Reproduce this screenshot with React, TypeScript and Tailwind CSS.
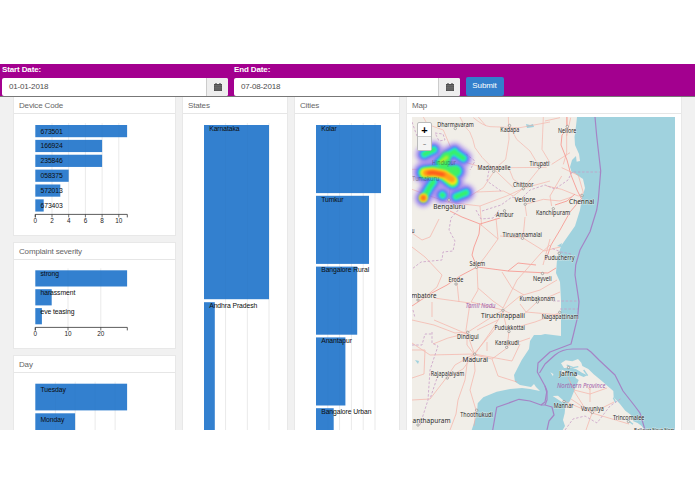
import React from "react";

type Bar = { label: string; w: number };

function Calendar() {
  return (
    <svg className="h-2 w-2" viewBox="0 0 8 8">
      <path fill="#4c4c4c" d="M0 1h1.4V0h1.2v1h2.8V0h1.2v1H8v7H0z" />
      <path stroke="#999" strokeWidth=".35" d="M0 2.4h8M0 4.2h8M0 6h8M2 2.4V8M4 2.4V8M6 2.4V8" />
    </svg>
  );
}

function DateField({ label, value }: { label: string; value: string }) {
  return (
    <div className="w-[226px]">
      <div className="h-[13.5px] pt-[1px] text-[8px] leading-[10px] font-bold tracking-[-0.13px] text-white">{label}</div>
      <div className="flex h-[18.5px] overflow-hidden rounded-[2px] bg-white text-[8px] tracking-[-0.17px] text-[#4c4c4c]">
        <div className="flex flex-1 items-center pl-[7px]">{value}</div>
        <div className="flex w-[22px] items-center justify-center border-l border-[#ccc] bg-[#eee]">
          <Calendar />
        </div>
      </div>
    </div>
  );
}

function Panel({ title, className, children }: { title: string; className: string; children: React.ReactNode }) {
  return (
    <section className={"shrink-0 overflow-hidden border-x border-[#e8e8e8] bg-white " + className}>
      <h2 className="h-[17px] border-b border-[#e6e6e6] pl-[5px] text-[8px] leading-[18px] tracking-[-0.16px] text-[#666]">{title}</h2>
      {children}
    </section>
  );
}

function RowChart(p: {
  bars: Bar[]; x: number; top: number; barH: number; pitch: number; dy: number;
  grid: number[]; ticks?: string[]; axisY: number; width: number; height: number; axisW: number;
}) {
  return (
    <svg width={p.width} height={p.height} className="block" fontFamily="Liberation Sans, Arial, sans-serif">
      {p.grid.map((g) => (
        <path key={g} d={`M${p.x + g} ${p.top - 2}V${p.axisY}`} stroke="#000" strokeOpacity=".11" strokeWidth=".7" />
      ))}
      {p.bars.map((b, i) => (
        <rect key={b.label} x={p.x} y={p.top + i * p.pitch} width={b.w} height={p.barH} fill="#2c7ccd" fillOpacity=".97" />
      ))}
      {p.grid.map((g) => (
        <path key={g} d={`M${p.x + g} ${p.top}V${p.axisY}`} stroke="#000" strokeOpacity=".025" strokeWidth=".7" />
      ))}
      {p.bars.map((b, i) => (
        <text key={b.label} x={p.x + 5.2} y={p.top + i * p.pitch + p.dy} fontSize="6.8" letterSpacing="-.08" fill="#0d0d0d">{b.label}</text>
      ))}
      {p.ticks && (
        <g>
          <path d={`M${p.x} ${p.axisY + 3}v-3h${p.axisW}v3`} fill="none" stroke="#333" strokeWidth=".8" />
          {p.ticks.map((t, i) => {
            const tx = p.x + (i === 0 ? 0 : p.grid[i - 1]);
            return (
              <g key={t}>
                <path d={`M${tx} ${p.axisY}v3`} stroke="#333" strokeWidth=".7" />
                <text x={tx} y={p.axisY + 9} fontSize="6.4" letterSpacing="-.1" textAnchor="middle" fill="#222">{t}</text>
              </g>
            );
          })}
        </g>
      )}
    </svg>
  );
}

// name, left x, baseline y, width, font size
const places: [string, number, number, number, number][] = [
  ["Dharmavaram", 437.3, 126.6, 36.5, 6.2],
  ["Kadapa", 500.3, 132.4, 19, 6.2],
  ["Nellore", 558, 133.2, 18.3, 6.2],
  ["Hindupur", 432, 165, 24, 6.2],
  ["Madanapalle", 477.5, 170, 33, 6.2],
  ["Tirupati", 529.5, 166.2, 20, 6.2],
  ["Tumakuru", 412.3, 180.8, 27, 6.2],
  ["Chittoor", 513, 187.2, 20.5, 6.2],
  ["Vellore", 514.5, 202.4, 21, 7.2],
  ["Chennai", 569, 204, 25.3, 7.2],
  ["Bengaluru", 433.3, 209.2, 32, 7.2],
  ["Ambur", 496, 217.4, 17.5, 6.2],
  ["Kanchipuram", 536, 214.8, 34, 6.2],
  ["Tiruvannamalai", 502.5, 236.8, 39.5, 6.2],
  ["u", 411.5, 232.5, 3, 6.2],
  ["Puducherry", 544.5, 260.4, 30, 6.2],
  ["Salem", 469.5, 265.6, 15.5, 6.2],
  ["Neyveli", 533, 280.5, 18.7, 6.2],
  ["Erode", 448.5, 282, 14.7, 6.2],
  ["mbatore", 411.5, 298.2, 25, 7],
  ["Kumbakonam", 519.5, 300.8, 35.5, 6.2],
  ["Tiruchirappalli", 481, 318.4, 44, 7.2],
  ["Nagapattinam", 541.7, 319, 36.8, 6.2],
  ["Pudukkottai", 494.5, 329.7, 30.5, 6.2],
  ["Dindigul", 457, 339, 21.7, 6.2],
  ["Karaikudi", 495, 345.4, 24, 6.2],
  ["Madurai", 462.5, 362.4, 25.5, 7.2],
  ["Rajapalaiyam", 430.7, 376.4, 33.5, 6.2],
  ["Jaffna", 559.3, 376.3, 18, 7],
  ["Mannar", 553.7, 408, 19.7, 6.2],
  ["Vavuniya", 581, 410.8, 22.7, 6.2],
  ["Thoothukudi", 460.3, 416.8, 32.5, 6.2],
  ["Trincomalee", 613, 419.8, 31.3, 6.2],
  ["anthapuram", 412.5, 422.8, 38, 7],
  ["Ballavat Nout Nort", 634, 432.4, 40, 5],
];

const towns: [number, number][] = [
  [455.3, 128.5], [509.5, 125.5], [567.3, 126.5], [493.7, 171.3], [539.3, 167.3], [523.3, 188.7],
  [525.2, 204.2], [582, 195.7], [449, 200], [504.5, 210.8], [553.3, 208.7], [522.5, 238.3], [559.2, 253.3],
  [476.5, 267.3], [542.5, 273.5], [456, 284], [418, 300], [537.5, 302], [503, 310.3], [559.8, 312.3],
  [509, 331.5], [467.8, 332.3], [506.7, 347.3], [474.7, 354.2], [447.3, 378], [568.5, 367.5],
  [564, 401.5], [592.3, 412.5], [476.7, 410.2], [628.5, 421.5], [418, 425],
];

function HeatLayer({ w, color, blur, opacity = 1 }: { w: number; color: string; blur: number; opacity?: number }) {
  return (
    <g style={{ filter: `blur(${blur}px)` }} opacity={opacity}>
      <path
        d="M73 175L101 161M117 200L138 182L164 166M166 170L190 187M142 180L132 215M100 258L88 275L70 307M127 297L128 298M168 302L198 290"
        fill="none" stroke={color} strokeWidth={w} strokeLinecap="round" strokeLinejoin="round"
      />
      <path
        d="M72 230L100 227L132 233L168 225M128 234L158 258"
        fill="none" stroke={color} strokeWidth={w + 14} strokeLinecap="round" strokeLinejoin="round"
      />
    </g>
  );
}

function CoastMap() {
  return (
    <svg width="263" height="313" viewBox="412 117 263 313" className="block" fontFamily="Noto Sans, Open Sans, sans-serif">
      <rect x="412" y="117" width="264" height="313" fill="#a0d2de" />
      <path
        fill="#f1eee8"
        d="M412 117H577L576 126L574.5 137L575 145L579 154L580 161L575 162L571 170L577 175L583 179L585 188L582 198L580 210L575 226L568 236L561 246L557 260L556 273L560 282L561 300L561 336L545 334L541 335L534 335L530 341L529 349L521.7 360L514 375L515 381.7L520 385L531 387L534 384L536 387L540 391L530 389L522 388L510 389L496.7 391.7L483.3 397.3L477.7 403.3L477 413L474 423L471.7 430H412Z"
      />
      <g transform="translate(545 320) scale(.33333)">
        <path
          fill="#f1eee8"
          d="M48 130L62 121L82 124L99 117L109 128L112 138L130 147L146 163L168 181L205 213L206 232L225 252L241 272L258 285L265 304L278 309L290 318L300 332H52L60 318L54 300L59 280L61 258L75 243L84 221L101 180L91 173L96 163L116 171L127 166L111 158L94 148L80 143L57 144Z"
        />
        <path fill="#f1eee8" d="M23 228L39 227L57 243L54 248ZM16 157l9 5-1 7zM50 149l20 8-5 9-13-5z" />
        <path fill="none" stroke="#a0d2de" strokeWidth="4" d="M65 135l20 8 15-3M116 150l12 17M36 285l13 18-6 18M244 298l20 15M205 233l7 14" />
      </g>
      <path fill="#a0d2de" d="M572 160l4-4 1 9 4 6-9 2-2-6zM526 124l4 1 3-1 1 3-7 1zM557 246l5-3-1 4zM415 360l4 1-1 3z" />

      <g opacity=".75">
        <g fill="none" stroke="#f6a79c" strokeLinejoin="round" transform="translate(400 96) scale(.33333)">
          <path strokeWidth="2.2" d="M70 63L82 85L130 102L151 152M180 63Q195 95 209 107Q220 130 225 155L247 185L278 216L340 275M151 160V270L145 319L240 330L320 300L370 277L450 255M325 63L327 130L317 190L283 220M220 65Q250 90 270 92L360 95L450 78M327 87L350 130L390 165L420 215L370 277M235 63L258 90M36 220H75L140 200M200 200L240 212L333 215L440 214M36 280L90 300L145 319M283 225L250 275L210 300M370 277L340 300L310 285L230 288M328 220L340 250L370 270M430 63L426 160L450 200M375 325L380 360M240 330L245 390" />
          <path strokeWidth="2.4" d="M435 75L480 65M485 215L535 238L550 290L535 300L485 280L440 270M500 63V170L490 205M375 325L430 310L480 315L515 303M485 240L450 300L455 330M510 170L455 205M512 65L500 120" />
        </g>
        <g fill="none" stroke="#f88078" strokeWidth=".9">
          <path d="M567 117V130L562 135L561 145L567 160L571 175L577 190L581 198M582 198L570 212L560 230L551 245L546 260M450 211L462 217L480 224L500 218M480 224L479 234L474 247L472 255L477 267L460 276L447 285L430 294L412 306M477 267L508 271L518 263L536 265M508 271L548 273L556 268M575 194L567 201L555 205" />
        </g>
        <g fill="none" stroke="#f6a79c" strokeWidth=".8" strokeLinejoin="round">
          <path d="M412 233L422 240L430 237L439 219M412 247L425 257L442 275L437 287L425 297M480 224L498 239L496 218M498 239L485 257L477 267M525 217L523 238L500 236M523 238L544 251L560 247M550 245L541 253L526 270L517 280L503 308M477 267L478 290L471 302L503 310M502 272L512 288L524 295M557 280L540 290L520 296L503 310M434 298L470 303L466 330L474 353M478 288L493 301L503 308M503 310L520 318L537 302L560 292M550 239L543 265M520 304L526 312L560 315M412 320L434 325L455 333L468 332L487 320L503 310M432 302V317M503 312L492 330L475 354M503 312L507 330L535 322L559 313M412 343L430 355L474 354M474 354L495 329M474 354L512 361L520 344M475 355L492 359L498 376L517 382M507 346L530 338M509 331L507 348L492 359M487 342V351M433 344L448 338L468 333M434 320L467 334L467 345L474 354M468 356L465 380L458 400L456 414L450 430M474 354L475 371L470 390L476 410L474 426M474 354L455 365L447 377L430 399L412 400M412 350L425 350L424 374L412 378M447 378L463 369L474 354M457 283L459 302M477 330L498 320" />
          <path d="M568 377L574 390L590 394L607 388M574 391L586 410L592 413L586 430M590 390L585 384M571 399L592 413L629 424M592 413L614 402M564 401L585 410M590 387V402" />
        </g>
      </g>
      <g fill="none" stroke="#c79bc5" strokeWidth=".75" strokeDasharray="2.5 1.7">
        <path d="M412 122L418 139L425 146M435 133l8 1 2 6-6 1zM482 211L501 205L512 197L520 200L530 190L545 185L555 189L568 180L572 172H600M501 191L487 181L489 170M466 154l9 7-5 9M476 210l5 9 12-1 6-8M461 207L451 218L449 230L455 241L453 251L443 252L442 260L421 262L412 269M432 332L432 343L438 346L430 370L428 400L420 425M438 375L430 399M413 310l2 8M571 254l-10-2-10-4M553 301h26M560 309h18M565 430l8-11 12-3 12 7 13-17 12-8M412 345h10l3-11h8" />
      </g>
      <g fill="none" stroke="#a584c5" strokeWidth="1.2" strokeLinejoin="round">
        <path d="M595 117L596.7 136L600.7 171L598.3 200L596.7 210L590 231.7L580 250L575.7 265L575 275L579 301.7L577.7 316.7L573.3 335L571 344L550 352L538 363L537.3 372L545 386L546.7 392L545 402L541 405L530 401L519 399.3L496.7 407.3L492.7 430" />
        <path d="M539.5 373L545 364L555 355Q562 349 573 349L587 349L591 352L599 360L615 375L623 391L634 405L640 413L645 430M545 386L547 391V400L545 405H541M545 405L552 407L554 415L549 421L547 430" />
      </g>

      <g transform="translate(400 96) scale(.33333)">
        <HeatLayer w={52} color="#8258ee" blur={7} opacity={0.6} />
        <HeatLayer w={33} color="#4068ff" blur={4} opacity={0.75} />
        <HeatLayer w={22} color="#20e4e6" blur={3} />
        <HeatLayer w={13} color="#38ef6a" blur={3} />
        <g fill="none" strokeLinecap="round" strokeLinejoin="round">
          <path d="M76 230L100 226L132 230L162 225M132 233L158 253M138 182L130 212" stroke="#42f064" strokeWidth="28" style={{ filter: "blur(4px)" }} />
          <path d="M74 230L100 229L132 235L158 254M70 305V306" stroke="#f7ee18" strokeWidth="27" style={{ filter: "blur(3px)" }} />
          <path d="M140 184L122 198" stroke="#b6ef28" strokeWidth="10" style={{ filter: "blur(3px)" }} />
          <path d="M78 231L100 229L132 235L156 250M70 305V306" stroke="#ff9f1b" strokeWidth="18" style={{ filter: "blur(3px)" }} />
          <path d="M85 231L100 230L130 236M70 305V306" stroke="#ff4b1d" strokeWidth="10" style={{ filter: "blur(4px)" }} />
        </g>
      </g>

      <g fill="#f1eee8" stroke="#777" strokeWidth=".55">
        {towns.map(([x, y]) => <circle key={`${x}-${y}`} cx={x} cy={y} r="1.2" />)}
      </g>
      {places.map(([name, x, y, w, size]) => {
        const faded = name === "Hindupur" || name === "Tumakuru";
        return (
          <text
            key={name} x={x} y={y} fontSize={size} textLength={w} lengthAdjust="spacingAndGlyphs"
            fill="#2b2b2b" fillOpacity={faded ? 0.5 : 1} stroke="#f5f2ed" strokeWidth={faded ? 0 : 1}
            strokeOpacity=".6" paintOrder="stroke"
          >
            {name}
          </text>
        );
      })}
      <g fill="#a261ad" fontStyle="italic" fontSize="6.2">
        <text x="465.5" y="308.3" textLength="30" lengthAdjust="spacingAndGlyphs">Tamil Nadu</text>
        <text x="557" y="388" textLength="48.5" lengthAdjust="spacingAndGlyphs">Northern Province</text>
      </g>
    </svg>
  );
}

export default function App() {
  return (
    <main className="h-[494px] w-[695px] overflow-hidden bg-white pt-16 font-['Liberation_Sans',Arial,sans-serif]">
      <header className="flex h-[33px] gap-[6px] border-b border-[#777] bg-[#a3008f] pl-[2px]">
        <DateField label="Start Date:" value="01-01-2018" />
        <DateField label="End Date:" value="07-08-2018" />
        <button className="mt-[13px] -ml-[.5px] h-[18.5px] w-[38px] rounded-[2px] bg-[#337fcc] text-[8px] leading-[18px] tracking-[-0.1px] text-white">Submit</button>
      </header>

      <div className="flex h-[333px] gap-[6px] overflow-hidden bg-[#f1f1f1] pl-[13px]">
        <div className="flex w-[163px] shrink-0 flex-col gap-[6px]">
          <Panel title="Device Code" className="h-[139px] border-b">
            <RowChart
              bars={[{ label: "673501", w: 91.8 }, { label: "166924", w: 66.8 }, { label: "235846", w: 66.8 }, { label: "058375", w: 33.4 }, { label: "572013", w: 25 }, { label: "673403", w: 8.4 }]}
              x={21.3} top={11} barH={12.2} pitch={14.87} dy={8.6} grid={[16.7, 33.4, 50.1, 66.8, 83.5]}
              ticks={["0", "2", "4", "6", "8", "10"]} axisY={100.4} axisW={92} width={161} height={121}
            />
          </Panel>
          <Panel title="Complaint severity" className="h-[107px] border-y">
            <RowChart
              bars={[{ label: "strong", w: 91.8 }, { label: "harassment", w: 16.4 }, { label: "eve teasing", w: 6.6 }]}
              x={21.3} top={10.3} barH={16.2} pitch={18.9} dy={5.8} grid={[32.7, 65.5]}
              ticks={["0", "10", "20"]} axisY={67.4} axisW={92} width={161} height={88}
            />
          </Panel>
          <Panel title="Day" className="h-[140px] border-y">
            <RowChart
              bars={[{ label: "Tuesday", w: 91.8 }, { label: "Monday", w: 39.8 }]}
              x={21.3} top={10.7} barH={26.7} pitch={29.6} dy={8.5} grid={[20, 39.9, 59.8, 79.8]}
              axisY={121} axisW={92} width={161} height={121}
            />
          </Panel>
        </div>
        <Panel title="States" className="h-[400px] w-[106px]">
          <RowChart
            bars={[{ label: "Karnataka", w: 65 }, { label: "Andhra Pradesh", w: 10.8 }]}
            x={21} top={11} barH={174.2} pitch={177.2} dy={5.8} grid={[21.6, 43.3, 65]}
            axisY={330} axisW={65} width={104} height={330}
          />
        </Panel>
        <Panel title="Cities" className="h-[400px] w-[106px]">
          <RowChart
            bars={[{ label: "Kolar", w: 65 }, { label: "Tumkur", w: 53 }, { label: "Bangalore Rural", w: 41.2 }, { label: "Anantapur", w: 29.4 }, { label: "Bangalore Urban", w: 17.7 }]}
            x={21} top={11} barH={68.1} pitch={70.8} dy={5.8} grid={[11.8, 23.6, 35.4, 47.2, 59]}
            axisY={330} axisW={65} width={104} height={330}
          />
        </Panel>
        <Panel title="Map" className="h-[400px] w-[276px]">
          <div className="relative mt-[3px] ml-[5px] h-[313px] w-[263px] overflow-hidden">
            <CoastMap />
            <div className="absolute top-[5px] left-[5px] h-[29px] w-[15px] overflow-hidden rounded-[2px] border border-[#bbb] bg-white text-center text-[11px] leading-[14px] font-bold">
              <div className="h-[14px] border-b border-[#ccc] text-black">+</div>
              <div className="h-[14px] bg-[#f4f4f4] leading-[12px] font-normal text-[#999]">-</div>
            </div>
          </div>
        </Panel>
      </div>
    </main>
  );
}
